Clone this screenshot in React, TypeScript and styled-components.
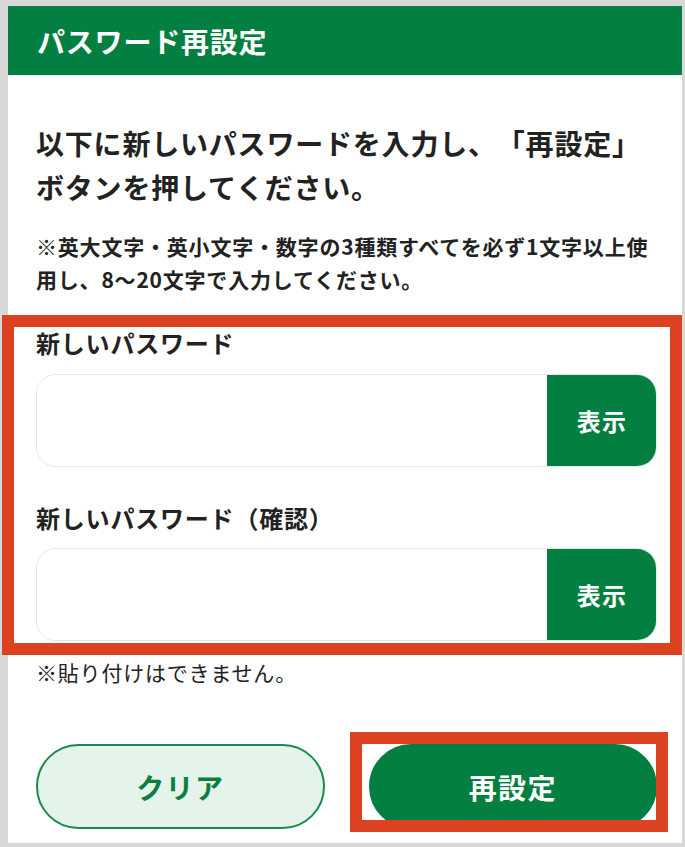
import React from 'react';
import styled, { createGlobalStyle } from 'styled-components';

const GREEN = '#037f41';
const MARK = '#dc4120';

const GlobalStyle = createGlobalStyle`
  html, body {
    margin: 0;
    padding: 0;
    background: #ffffff;
  }
  body {
    font-family: "Noto Sans CJK JP", "Noto Sans", sans-serif;
    color: #222222;
    letter-spacing: 0.05em;
    text-spacing-trim: space-all;
  }
  * {
    box-sizing: border-box;
  }
`;

const Frame = styled.div`
  min-height: 847px;
  border-style: solid;
  border-color: #d8d8d8;
  border-width: 6px 3px 4px 8px;
  background: #ffffff;
  display: flex;
  flex-direction: column;
`;

const Header = styled.header`
  height: 69px;
  background: ${GREEN};
  color: #ffffff;
  display: flex;
  align-items: center;
  padding-left: 29px;
  font-size: 28px;
  font-weight: 700;
`;

const Body = styled.main`
  flex: 1;
  padding: 46px 25px 14px 28px;
  display: flex;
  flex-direction: column;
`;

const Lead = styled.p`
  margin: 0;
  font-size: 28px;
  line-height: 44px;
  font-weight: 700;
`;

const Rule = styled.p`
  margin: 21px 0 0;
  font-size: 21px;
  line-height: 33px;
  font-weight: 700;
`;

const Fields = styled.section`
  position: relative;
  margin-top: 32px;
  display: flex;
  flex-direction: column;
`;

const Label = styled.label<{ $gap: number }>`
  display: block;
  margin-top: ${(p) => p.$gap}px;
  font-size: 24px;
  line-height: 30px;
  font-weight: 700;
`;

const InputGroup = styled.div<{ $gap: number }>`
  margin-top: ${(p) => p.$gap}px;
  height: 93px;
  display: flex;
  border: 1px solid #e6e6e6;
  border-radius: 20px;
  overflow: hidden;
`;

const PasswordInput = styled.input`
  flex: 1;
  min-width: 0;
  border: none;
  outline: none;
  padding: 0 20px;
  font-size: 24px;
  background: #ffffff;
`;

const ShowButton = styled.button`
  width: 110px;
  border: none;
  margin: -1px -1px -1px 0;
  background: ${GREEN};
  color: #ffffff;
  font-family: inherit;
  font-size: 24px;
  font-weight: 700;
  letter-spacing: 0.05em;
  border-radius: 0 20px 20px 0;
`;

const Mark = styled.div<{ $t: number; $r: number; $b: number; $l: number }>`
  position: absolute;
  top: ${(p) => p.$t}px;
  right: ${(p) => p.$r}px;
  bottom: ${(p) => p.$b}px;
  left: ${(p) => p.$l}px;
  border: 12px solid ${MARK};
  pointer-events: none;
`;

const PasteNote = styled.p`
  margin: 17px 0 0;
  font-size: 21px;
  line-height: 28px;
  font-weight: 400;
`;

const Actions = styled.div`
  margin-top: 58px;
  display: flex;
  gap: 44px;
`;

const ActionSlot = styled.div`
  position: relative;
  flex: 1;
  display: flex;
`;

const ActionButton = styled.button<{ $primary?: boolean }>`
  flex: 1;
  height: 85px;
  border-radius: 43px;
  border: 2px solid ${(p) => (p.$primary ? GREEN : '#1a8a4d')};
  background: ${(p) => (p.$primary ? GREEN : '#e5f4ea')};
  color: ${(p) => (p.$primary ? '#ffffff' : '#0b7f40')};
  font-family: inherit;
  font-size: 28px;
  font-weight: 700;
  letter-spacing: 0.05em;
`;

export default function App() {
  return (
    <>
      <GlobalStyle />
      <Frame>
        <Header>パスワード再設定</Header>
        <Body>
          <Lead>
            以下に新しいパスワードを入力し、「再設定」
            <br />
            ボタンを押してください。
          </Lead>
          <Rule>
            ※英大文字・英小文字・数字の3種類すべてを必ず1文字以上使用し、8〜20文字で入力してください。
          </Rule>
          <Fields>
            <Label $gap={0}>新しいパスワード</Label>
            <InputGroup $gap={16}>
              <PasswordInput type="password" />
              <ShowButton type="button">表示</ShowButton>
            </InputGroup>
            <Label $gap={36}>新しいパスワード（確認）</Label>
            <InputGroup $gap={15}>
              <PasswordInput type="password" />
              <ShowButton type="button">表示</ShowButton>
            </InputGroup>
            <Mark $t={-13} $r={-25} $b={-14} $l={-34} />
          </Fields>
          <PasteNote>※貼り付けはできません。</PasteNote>
          <Actions>
            <ActionSlot>
              <ActionButton type="button">クリア</ActionButton>
            </ActionSlot>
            <ActionSlot>
              <ActionButton type="button" $primary>
                再設定
              </ActionButton>
              <Mark $t={-12} $r={-11} $b={-3} $l={-19} />
            </ActionSlot>
          </Actions>
        </Body>
      </Frame>
    </>
  );
}
